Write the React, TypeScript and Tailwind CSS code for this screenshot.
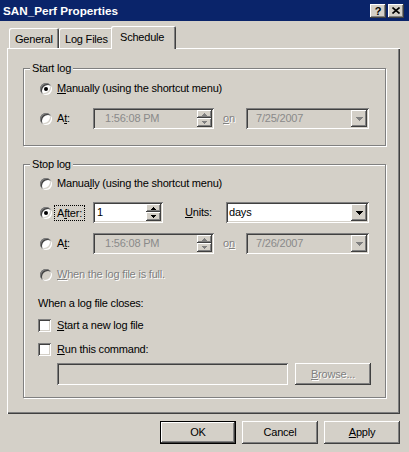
import React from "react";

const raised =
  "shadow-[inset_-1px_-1px_#404040,inset_1px_1px_#ffffff,inset_-2px_-2px_#808080,inset_2px_2px_#d4d0c8]";
const sunken =
  "shadow-[inset_1px_1px_#808080,inset_-1px_-1px_#ffffff,inset_2px_2px_#404040,inset_-2px_-2px_#d4d0c8]";
const dim = "text-[#808080] [text-shadow:1px_1px_0_#ffffff]";

function Radio({ checked = false, disabled = false }: { checked?: boolean; disabled?: boolean }) {
  return (
    <span className="w-[19px] h-full flex items-center pl-[2px]">
      <span
        className={`w-[12px] h-[12px] rounded-full flex items-center justify-center ${disabled ? "bg-[#d4d0c8]" : "bg-white"} ${sunken}`}
      >
        {checked && <span className="w-[4px] h-[4px] rounded-full bg-black" />}
      </span>
    </span>
  );
}

function Check() {
  return (
    <span className="w-[19px] h-full flex items-center">
      <span className={`w-[13px] h-[13px] bg-white ${sunken}`} />
    </span>
  );
}

function Spin({ disabled = false }: { disabled?: boolean }) {
  const c = disabled ? "#808080" : "#000000";
  return (
    <div className="w-[15px] h-full flex flex-col">
      <div className={`h-[8px] flex items-center justify-center bg-[#d4d0c8] ${raised}`}>
        <svg width="5" height="3">
          <path d="M2 0h1v1h1v1h1v1H0V2h1V1h1z" fill={c} />
        </svg>
      </div>
      <div className={`h-[9px] flex items-center justify-center bg-[#d4d0c8] ${raised}`}>
        <svg width="5" height="3">
          <path d="M0 0h5v1H4v1H3v1H2V2H1V1H0z" fill={c} />
        </svg>
      </div>
    </div>
  );
}

function Drop({ disabled = false }: { disabled?: boolean }) {
  return (
    <div className={`w-[16px] h-full flex items-center justify-center bg-[#d4d0c8] ${raised}`}>
      <svg width="7" height="4">
        <path d="M0 0h7v1H6v1H5v1H4v1H3V3H2V2H1V1H0z" fill={disabled ? "#808080" : "#000000"} />
      </svg>
    </div>
  );
}

function TimeRow({ date, onKey }: { date: string; onKey: "o" | "n" }) {
  return (
    <div className="h-[21px] flex items-center">
      <Radio />
      <span className="w-[36px]">
        A<u>t</u>:
      </span>
      <div className={`w-[121px] h-full p-[2px] flex bg-[#d4d0c8] ${sunken}`}>
        <span className="flex-1 pl-[10px] leading-[17px] text-[#8a8a8a]">1:56:08 PM</span>
        <Spin disabled />
      </div>
      <span className={`ml-[9px] w-[23px] ${dim}`}>
        {onKey === "o" ? (
          <>
            <u>o</u>n
          </>
        ) : (
          <>
            o<u>n</u>
          </>
        )}
      </span>
      <div className={`w-[123px] h-full p-[2px] flex bg-[#d4d0c8] ${sunken}`}>
        <span className="flex-1 pl-[8px] leading-[17px] text-[#8a8a8a]">{date}</span>
        <Drop disabled />
      </div>
    </div>
  );
}

function Group({ title, children, className = "" }: { title: string; children: React.ReactNode; className?: string }) {
  return (
    <fieldset
      className={`w-[363px] border border-[#808080] shadow-[1px_1px_0_#ffffff,inset_1px_1px_0_#ffffff] ${className}`}
    >
      <legend className="ml-[6px] px-[2px] leading-[13px] bg-[#d4d0c8]">{title}</legend>
      <div className="pl-[14px]">{children}</div>
    </fieldset>
  );
}

function Button({ children, primary = false }: { children: React.ReactNode; primary?: boolean }) {
  const edge = primary
    ? "shadow-[inset_0_0_0_1px_#000000,inset_-2px_-2px_#404040,inset_2px_2px_#ffffff,inset_-3px_-3px_#808080]"
    : raised;
  return (
    <div className={`w-[76px] h-[23px] flex items-center justify-center bg-[#d4d0c8] ${edge}`}>
      {children}
    </div>
  );
}

export default function App() {
  return (
    <div className="w-[409px] h-[452px] overflow-hidden bg-[#d4d0c8] text-black text-[11px] leading-[13px] tracking-[-0.2px] font-['Liberation_Sans',Arial,sans-serif]">
      {/* caption */}
      <div className="h-[21px] bg-[#0a246a] flex items-center justify-between pl-[3px] pr-[5px]">
        <span className="text-white font-bold text-[11.7px] tracking-normal">SAN_Perf Properties</span>
        <div className="flex gap-[2px]">
          <div className={`w-[16px] h-[14px] flex items-center justify-center font-bold text-[11px] leading-[14px] tracking-normal ${raised} bg-[#d4d0c8]`}>
            ?
          </div>
          <div className={`w-[16px] h-[14px] flex items-center justify-center ${raised} bg-[#d4d0c8]`}>
            <svg width="8" height="7">
              <path d="M0.5 0.5L7.5 6.5M7.5 0.5L0.5 6.5" stroke="#000" strokeWidth="1.6" />
            </svg>
          </div>
        </div>
      </div>

      {/* tabs */}
      <div className="mt-[5px] ml-[9px] h-[22px] flex items-end">
        <div className="w-[50px] h-[20px] pl-[6px] pt-[5px] rounded-t-[2px] shadow-[inset_1px_1px_#ffffff,inset_-1px_0_#404040,inset_-2px_0_#808080]">
          General
        </div>
        <div className="w-[54px] h-[20px] pl-[6px] pt-[5px] rounded-t-[2px] shadow-[inset_1px_1px_#ffffff,inset_-1px_0_#404040,inset_-2px_0_#808080]">
          Log Files
        </div>
        <div className="relative z-10 -ml-[2px] w-[65px] h-[23px] -mb-[1px] pl-[9px] pt-[5px] bg-[#d4d0c8] rounded-t-[2px] shadow-[inset_1px_1px_#ffffff,inset_-1px_0_#404040,inset_-2px_0_#808080]">
          Schedule
        </div>
      </div>

      {/* tab page */}
      <div className="ml-[7px] w-[393px] pt-[14px] px-[16px] pb-[16px] shadow-[inset_1px_1px_#ffffff,inset_-1px_-1px_#404040,inset_-2px_-2px_#808080]">
        <Group title="Start log" className="pb-[16px]">
          <div className="mt-[7px] h-[13px] flex items-center">
            <Radio checked />
            <span>
              <u>M</u>anually (using the shortcut menu)
            </span>
          </div>
          <div className="mt-[13px]">
            <TimeRow date="7/25/2007" onKey="o" />
          </div>
        </Group>

        <Group title="Stop log" className="mt-[12px] pb-[12px]">
          <div className="mt-[6px] h-[13px] flex items-center">
            <Radio />
            <span>
              Manua<u>l</u>ly (using the shortcut menu)
            </span>
          </div>

          <div className="mt-[12px] h-[21px] flex items-center">
            <Radio checked />
            <span className="w-[36px]">
              <span className="-ml-[3px] px-[2px] border border-dotted border-black leading-[14px] inline-block">
                A<u>f</u>ter:
              </span>
            </span>
            <div className={`w-[70px] h-full p-[2px] flex bg-white ${sunken}`}>
              <span className="flex-1 pl-[2px] leading-[17px]">1</span>
              <Spin />
            </div>
            <span className="ml-[22px] w-[41px]">
              <u>U</u>nits:
            </span>
            <div className={`w-[143px] h-full p-[2px] flex bg-white ${sunken}`}>
              <span className="flex-1 pl-[1px] leading-[17px]">days</span>
              <Drop />
            </div>
          </div>

          <div className="mt-[10px]">
            <TimeRow date="7/26/2007" onKey="n" />
          </div>

          <div className="mt-[14px] h-[13px] flex items-center">
            <Radio disabled />
            <span className={dim}>
              <u>W</u>hen the log file is full.
            </span>
          </div>

          <div className="mt-[16px] h-[13px]">When a log file closes:</div>

          <div className="mt-[9px] h-[13px] flex items-center">
            <Check />
            <span>
              <u>S</u>tart a new log file
            </span>
          </div>

          <div className="mt-[11px] h-[13px] flex items-center">
            <Check />
            <span>
              <u>R</u>un this command:
            </span>
          </div>

          <div className="mt-[7px] h-[22px] flex pl-[19px]">
            <div className={`w-[231px] h-full bg-[#d4d0c8] ${sunken}`} />
            <div className={`ml-[7px] w-[76px] h-full flex items-center justify-center ${raised} ${dim}`}>
              <span>
                <u>B</u>rowse...
              </span>
            </div>
          </div>
        </Group>
      </div>

      {/* dialog buttons */}
      <div className="mt-[7px] flex justify-end gap-[6px] pr-[9px]">
        <Button primary>OK</Button>
        <Button>Cancel</Button>
        <Button>
          <span>
            <u>A</u>pply
          </span>
        </Button>
      </div>
    </div>
  );
}
